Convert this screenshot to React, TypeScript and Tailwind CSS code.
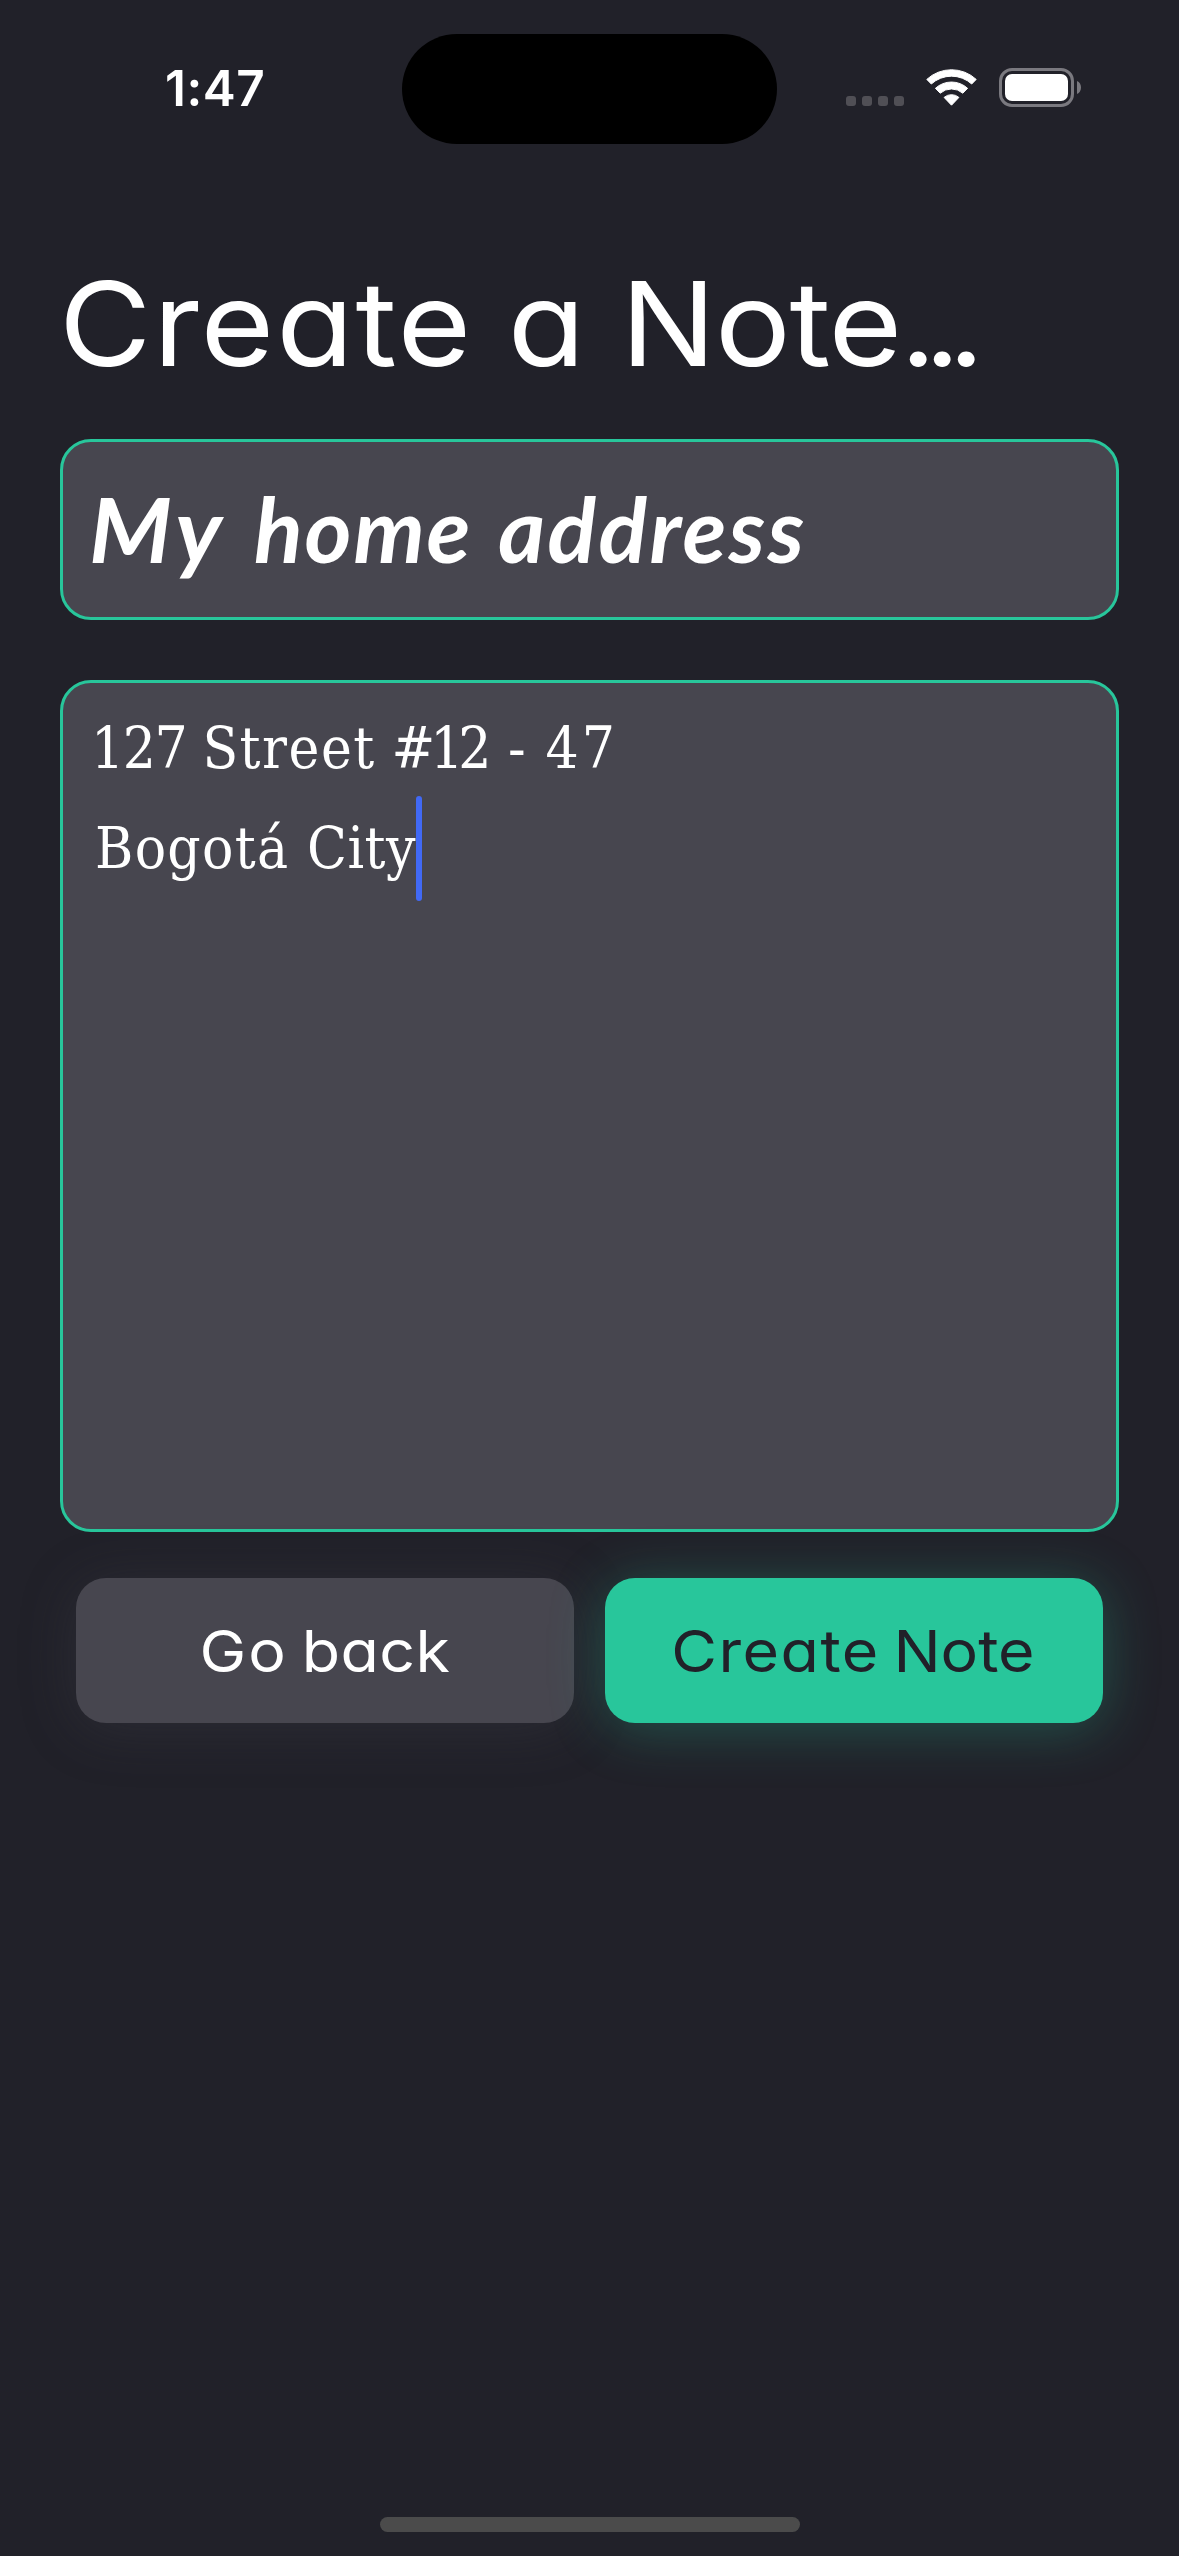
import type { ReactNode } from "react";

function WifiIcon() {
  return (
    <svg width="51" height="37" viewBox="0 0 51 37" fill="#fff" className="shrink-0">
      <g stroke="#fff" strokeWidth="1" strokeLinejoin="round">
        <path d="M.8 10.4A36.4 36.4 0 0 1 50.2 10.4L45.7 15A30 30 0 0 0 5.3 15Z" />
        <path d="M9.4 19.3A23.8 23.8 0 0 1 41.6 19.3L36.8 24.2A17.2 17.2 0 0 0 14.2 24.2Z" />
        <path d="M18.1 28.4A11.4 11.4 0 0 1 32.9 28.4L25.5 36.2Z" />
      </g>
    </svg>
  );
}

function BatteryIcon() {
  return (
    <div className="flex items-center gap-[3px]">
      <div className="h-[39px] w-[75px] rounded-[13px] border-3 border-[#7a797f] p-[3px]">
        <div className="h-full w-full rounded-[7px] bg-white" />
      </div>
      <svg width="4" height="13" viewBox="0 0 4 13" fill="#7a797f">
        <path d="M0 0C2.6 1.1 4 3.6 4 6.5S2.6 11.9 0 13Z" />
      </svg>
    </div>
  );
}

function StatusBar() {
  return (
    <header className="flex h-[144px] items-center pt-[34px]">
      <div className="w-[402px] pl-[165px] text-[49.5px] leading-none font-semibold tracking-[0.5px]">1:47</div>
      <div className="h-[110px] w-[375px] rounded-full bg-black" />
      <div className="mt-[24px] ml-[69px] flex gap-[6px]">
        {[0, 1, 2, 3].map((i) => (
          <span key={i} className="size-[10px] rounded-[3px] bg-[#504f55]" />
        ))}
      </div>
      <div className="mb-[3px] ml-[22px] flex items-center gap-[22px]">
        <WifiIcon />
        <BatteryIcon />
      </div>
    </header>
  );
}

function ActionButton({ className, children }: { className: string; children: ReactNode }) {
  return (
    <button type="button" className={`h-[145px] flex-1 rounded-[30px] text-[58px] leading-none ${className}`}>
      <span className="flex scale-x-108 items-center justify-center">{children}</span>
    </button>
  );
}

export default function App() {
  return (
    <div className="flex h-[2556px] w-[1179px] flex-col overflow-hidden bg-[#212129] font-[Inter,sans-serif] text-white [font-feature-settings:'cv11']">
      <StatusBar />
      <main className="flex flex-1 flex-col px-[60px] pt-[110px]">
        <h1 className="flex h-[140px] origin-left scale-x-108 items-center text-[117px] leading-[140px]">
          <span className="-ml-[1px] tracking-[1.8px]">Create</span>
          <span className="ml-[32px]">a</span>
          <span className="ml-[33px] tracking-[-1px]">Note</span>
          <span className="-ml-[1px] tracking-[-11.5px]">...</span>
        </h1>

        <div className="mt-[45px] flex h-[181px] items-center rounded-[31px] border-3 border-[#28c69b] bg-[#47464f] pb-[4px] pl-[26px] text-[90px] leading-none font-bold italic [font-family:Lato,sans-serif]">
          <span className="origin-left scale-x-105 tracking-[4px]">My</span>
          <span className="ml-[34.6px] tracking-[1.8px]">home</span>
          <span className="ml-[26px] tracking-[2.4px]">address</span>
        </div>

        <div className="mt-[60px] h-[852px] rounded-[31px] border-3 border-[#28c69b] bg-[#47464f] pt-[15px] text-[58px] leading-[100px] [font-family:'DejaVu_Serif_Condensed','DejaVu_Serif',serif]">
          <p className="flex pl-[28px]">
            <span className="tracking-[-1.4px]">127</span>
            <span className="ml-[16px] tracking-[1.5px]">Street</span>
            <span className="ml-[15.7px] tracking-[-5px]">#12</span>
            <span className="ml-[21.4px]">-</span>
            <span className="ml-[20px] tracking-[3px]">47</span>
          </p>
          <p className="flex items-center pl-[32px]">
            <span className="tracking-[1.3px]">Bogotá</span>
            <span className="ml-[17.6px] tracking-[0.5px]">City</span>
            <span className="-my-[3px] h-[105px] w-[6px] rounded-full bg-[#4169f5]" />
          </p>
        </div>

        <div className="mt-[46px] flex gap-[31px] px-[16px]">
          <ActionButton className="bg-[#47464f] shadow-[0_6px_56px_rgba(71,70,79,0.3)]">
            <span className="tracking-[1.8px]">Go</span>
            <span className="ml-[13px] tracking-[0.4px]">back</span>
          </ActionButton>
          <ActionButton className="bg-[#28c69b] text-[#212129] shadow-[0_6px_56px_rgba(40,198,155,0.3)]">
            <span className="tracking-[1.4px]">Create</span>
            <span className="mr-[2px] ml-[12.5px]">Note</span>
          </ActionButton>
        </div>
      </main>
      <footer className="flex justify-center pb-[24px]">
        <div className="h-[15px] w-[420px] rounded-full bg-[#4b4b4b]" />
      </footer>
    </div>
  );
}
